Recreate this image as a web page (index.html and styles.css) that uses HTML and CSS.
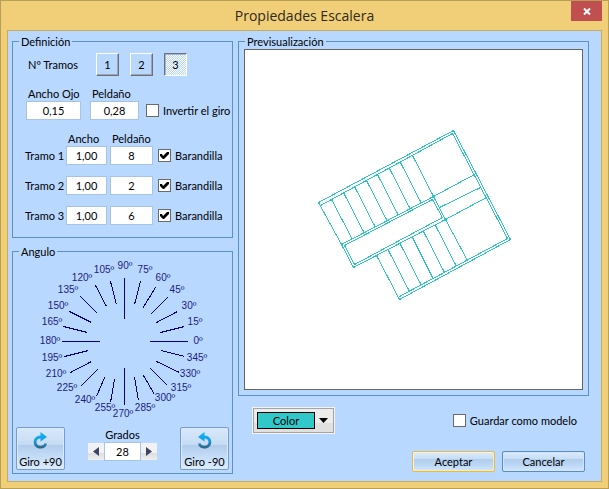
FILE: index.html
```html
<!DOCTYPE html>
<html lang="es">
<head>
<meta charset="utf-8">
<title>Propiedades Escalera</title>
<link rel="stylesheet" href="styles.css">
</head>
<body>
<div class="window">
  <header class="titlebar">
    <h1 class="title">Propiedades Escalera</h1>
    <button class="close" type="button" aria-label="Cerrar">
      <svg width="8" height="7" viewBox="0 0 8 7"><path d="M1 0.5 7 6.5M7 0.5 1 6.5" stroke="#fff" stroke-width="2" fill="none"/></svg>
    </button>
  </header>
  <form class="client">
    <div class="side">
      <fieldset class="group">
        <legend>Definición</legend>
        <div class="flights">
          <span class="flights-label">Nº Tramos</span>
          <button class="flight" type="button">1</button>
          <button class="flight" type="button">2</button>
          <button class="flight pressed" type="button" aria-pressed="true">3</button>
        </div>
        <div class="sizes">
          <label for="ojo">Ancho Ojo</label>
          <label for="huella">Peldaño</label>
          <input class="field" id="ojo" type="text" value="0,15">
          <input class="field" id="huella" type="text" value="0,28">
          <label class="check"><input type="checkbox">Invertir el giro</label>
        </div>
        <div class="runs">
          <span class="run-head ancho">Ancho</span>
          <span class="run-head">Peldaño</span>
          <label class="run-name" for="a1">Tramo 1</label>
          <input class="field" id="a1" type="text" value="1,00">
          <input class="field" type="text" value="8" aria-label="Peldaños tramo 1">
          <label class="check"><input type="checkbox" checked>Barandilla</label>
          <label class="run-name" for="a2">Tramo 2</label>
          <input class="field" id="a2" type="text" value="1,00">
          <input class="field" type="text" value="2" aria-label="Peldaños tramo 2">
          <label class="check"><input type="checkbox" checked>Barandilla</label>
          <label class="run-name" for="a3">Tramo 3</label>
          <input class="field" id="a3" type="text" value="1,00">
          <input class="field" type="text" value="6" aria-label="Peldaños tramo 3">
          <label class="check"><input type="checkbox" checked>Barandilla</label>
        </div>
      </fieldset>
      <fieldset class="group">
        <legend>Angulo</legend>
        <svg class="dial" viewBox="13 259 219 163">
          <path class="ticks" transform="translate(.5 .5)" d="M149 341H187M61 341H99M124 277V318M124 367V404M110 281 116 304M140 281 134 304M95 285 106 306M155 287 142 308M80 296 97 313M167 297 150 314M69 311 91 322M177 311 156 322M63 326 87 332M184 326 160 332M64 356 88 350M161 350 184 356M70 372 91 361M156 361 179 372M80 386 97 369M150 368 167 385M96 396 104 377M143 375 154 394M110 402 114 379M134 377 138 400"/>
          <g class="degrees">
            <text x="198" y="344">0º</text>
            <text x="195" y="325">15º</text>
            <text x="189" y="309">30º</text>
            <text x="177" y="293">45º</text>
            <text x="163" y="281">60º</text>
            <text x="145" y="273">75º</text>
            <text x="125" y="269">90º</text>
            <text x="104" y="273">105º</text>
            <text x="82" y="281">120º</text>
            <text x="68" y="293">135º</text>
            <text x="58" y="309">150º</text>
            <text x="52" y="325">165º</text>
            <text x="50" y="344">180º</text>
            <text x="52" y="361">195º</text>
            <text x="56" y="377">210º</text>
            <text x="67" y="391">225º</text>
            <text x="85" y="403">240º</text>
            <text x="105" y="411">255º</text>
            <text x="123" y="417">270º</text>
            <text x="145" y="411">285º</text>
            <text x="165" y="401">300º</text>
            <text x="181" y="391">315º</text>
            <text x="190" y="377">330º</text>
            <text x="197" y="361">345º</text>
          </g>
        </svg>
        <div class="turns">
          <button class="turn" type="button">
            <svg width="15" height="17" viewBox="0 0 15 17"><defs><linearGradient id="g" x1="0" y1="0" x2="0" y2="1"><stop offset="0" stop-color="#12b2fa"/><stop offset=".5" stop-color="#14a0e6"/><stop offset="1" stop-color="#34607c"/></linearGradient></defs><path fill="url(#g)" d="M7.500 0 14 5 7.500 9.500V6.500C5 6.500 3.500 8 3.500 10C3.500 12.500 5.200 13.700 7.500 13.700C9.500 13.700 10.800 13 11.300 11.500H14C13.500 14.700 11 16.500 7.500 16.500C3.500 16.500 .7 14 .7 10C.7 6.300 3.500 3.500 7.500 3.400Z"/></svg>
            Giro +90
          </button>
          <div class="degrees-box">
            <label for="grados">Grados</label>
            <div class="spinner">
              <button class="step" type="button" aria-label="Menos"><svg width="6" height="9" viewBox="0 0 6 9"><path d="M6 0V9L0 4.500Z" fill="#3c4664"/></svg></button>
              <input class="field" id="grados" type="text" value="28">
              <button class="step" type="button" aria-label="Más"><svg width="6" height="9" viewBox="0 0 6 9"><path d="M0 0V9L6 4.500Z" fill="#3c4664"/></svg></button>
            </div>
          </div>
          <button class="turn" type="button">
            <svg width="15" height="17" viewBox="0 0 15 17"><path transform="matrix(-1 0 0 1 15 0)" fill="url(#g)" d="M7.500 0 14 5 7.500 9.500V6.500C5 6.500 3.500 8 3.500 10C3.500 12.500 5.200 13.700 7.500 13.700C9.500 13.700 10.800 13 11.300 11.500H14C13.500 14.700 11 16.500 7.500 16.500C3.500 16.500 .7 14 .7 10C.7 6.300 3.500 3.500 7.500 3.400Z"/></svg>
            Giro -90
          </button>
        </div>
      </fieldset>
    </div>
    <div class="main">
      <fieldset class="group">
        <legend>Previsualización</legend>
        <div class="preview">
          <svg class="plan" viewBox="245 50 337 339">
            <g transform="translate(.5 .5)">
              <path d="M318 202 453 130 510 239 399 299 376 255M320 205 452 133 507 238 399 296M318 202 341 244"/>
              <path d="M331 199 352 239M343 192 364 233M354 186 375 227M366 180 387 221M377 174 398 215M389 168 410 209M400 162 421 203M412 155 433 196"/>
              <path d="M341 244 433 196 445 219 353 267ZM344 245 432 199 442 217 354 264Z"/>
              <path d="M433 196 474 174M439 207 480 187M445 219 486 197"/>
              <path d="M388 250 409 291M400 244 421 285M412 237 433 279M423 231 444 272M435 225 456 266M445 219 467 260"/>
            </g>
          </svg>
        </div>
      </fieldset>
      <div class="options">
        <button class="color" type="button"><span class="swatch">Color</span><svg width="9" height="5" viewBox="0 0 9 5"><path d="M0 0H9L4.500 5Z"/></svg></button>
        <label class="check"><input type="checkbox">Guardar como modelo</label>
      </div>
      <div class="actions">
        <button class="action default" type="submit">Aceptar</button>
        <button class="action" type="button">Cancelar</button>
      </div>
    </div>
  </form>
</div>
</body>
</html>
```
FILE: styles.css
```css
* { box-sizing: border-box; }

body {
  margin: 0;
  font: 11px/15px Lato, "Liberation Sans", sans-serif;
  color: #000;
}

button, input {
  margin: 0;
  padding: 0;
  font: inherit;
  color: inherit;
}

.window {
  display: flex;
  flex-direction: column;
  min-height: 100vh;
  padding: 0 6px 6px;
  background: #f0cf78;
  border: 1px solid #b89f58;
}

.titlebar {
  display: grid;
  grid-template-columns: 31px 1fr 31px;
  height: 29px;
}

.title {
  grid-column: 2;
  margin: 0;
  font: 14px/30px "Open Sans", "Noto Sans", sans-serif;
  text-align: center;
  color: #2f2a1c;
}

.close {
  display: grid;
  place-items: center;
  height: 20px;
  background: #c04f4f;
  border: 0;
}

.client {
  flex: 1;
  display: grid;
  grid-template-columns: 221px 1fr;
  gap: 5px;
  padding: 3px 12px 7px 4px;
  background: #b8d8ff;
  border: 1px solid #c8ab62;
}

.side {
  display: flex;
  flex-direction: column;
  gap: 6px;
}

.group {
  min-width: 0;
  margin: 0;
  padding: 0;
  border: 1px solid #5c90c8;
}

.group legend {
  margin-left: 6px;
  padding: 0 2px;
}

.flights {
  display: flex;
  align-items: center;
  gap: 11px;
  padding: 4px 0 0 15px;
}

.flights-label { width: 57px; }

.flight {
  width: 23px;
  height: 23px;
  background: #b8d8ff;
  border: 1px solid;
  border-color: #fff #6c7078 #6c7078 #fff;
  box-shadow: inset -1px -1px #9aa6b8;
}

.flight.pressed {
  background: repeating-conic-gradient(#fff 0 25%, #b8d8ff 0 50%) 0 0 / 2px 2px;
  border-color: #6c7078 #fff #fff #6c7078;
  box-shadow: inset 1px 1px #a8b8cc;
}

.field {
  width: 100%;
  height: 19px;
  text-align: center;
  background: #fff;
  border: 1px solid #a8c4e4;
}

.sizes {
  display: grid;
  grid-template-columns: 55px 49px 1fr;
  align-items: center;
  column-gap: 9px;
  padding: 10px 0 0 13px;
}

.sizes > label:nth-child(-n+2) { padding-left: 2px; }
.sizes > #ojo { grid-column: 1; }
.sizes .check { margin-left: -2px; }

.check {
  display: flex;
  align-items: center;
  gap: 4px;
  white-space: nowrap;
}

.check input {
  appearance: none;
  width: 13px;
  height: 13px;
  background: #fff;
  border: 1px solid #6a6a6a;
}

.check input:checked::before {
  content: "";
  display: block;
  height: 11px;
  background: #000;
  clip-path: polygon(1px 4px, 3px 4px, 4px 6px, 8px 2px, 10px 2px, 10px 4px, 5px 9px, 4px 9px, 1px 6px);
}

.runs {
  display: grid;
  grid-template-columns: 38px 41px 43px 1fr;
  align-items: center;
  gap: 11px 3px;
  padding: 11px 0 12px 12px;
}

.run-head {
  margin-bottom: -11px;
  padding-left: 2px;
}

.run-head.ancho { grid-column: 2; }
.run-head:nth-child(2) { grid-column: 3 / 5; }
.run-name { white-space: nowrap; }
.runs .check { padding-left: 2px; }

.dial {
  display: block;
  width: 100%;
}

.ticks {
  fill: none;
  stroke: #000080;
  shape-rendering: crispEdges;
}

.degrees {
  font-family: "Liberation Sans", Arial, sans-serif;
  font-size: 10px;
  fill: #1c1c80;
  text-anchor: middle;
}

.turns {
  display: flex;
  justify-content: space-between;
  padding: 5px 3px 3px;
}

.turn {
  display: flex;
  flex-direction: column;
  align-items: center;
  justify-content: space-between;
  width: 49px;
  height: 43px;
  padding-top: 4px;
  white-space: nowrap;
  background: linear-gradient(#d8e8fa 0, #c6dcf4 40%, #b0cdec 42%, #c8dff8 75%, #dcecff);
  border: 1px solid #7c9cc8;
  border-radius: 2px;
  box-shadow: inset 0 0 0 1px #d8eaff;
}

.degrees-box {
  width: 69px;
  text-align: center;
}

.spinner {
  display: grid;
  grid-template-columns: 16px 1fr 16px;
  align-items: center;
}

.step {
  display: grid;
  place-items: center;
  height: 17px;
  background: linear-gradient(#f2f2f2 60%, #dedede 60%, #eee);
  border: 0;
}

.preview {
  margin: 0 5px 5px;
  background: #fff;
  border: 1px solid #646464;
}

.plan {
  display: block;
  width: 100%;
  fill: none;
  stroke: #2ec4c4;
  shape-rendering: crispEdges;
}

.options {
  display: flex;
  align-items: center;
  justify-content: space-between;
  padding: 11px 12px 0 14px;
}

.color {
  display: flex;
  align-items: center;
  gap: 4px;
  width: 83px;
  height: 27px;
  padding: 0 4px;
  background: linear-gradient(#ececec 60%, #e0e0e0 60%);
  border: 1px solid #f4f4f4;
  box-shadow: inset 0 0 0 1px #a4a4a4;
}

.swatch {
  width: 58px;
  background: #30c8c8;
  border: 1px solid #000;
}

.actions {
  display: flex;
  justify-content: flex-end;
  gap: 7px;
  padding: 17px 4px 0 0;
}

.action {
  width: 83px;
  height: 21px;
  background: linear-gradient(#dcebfa 0, #c8def6 35%, #b0cdec 38%, #bcd8f6 70%, #d4e8ff);
  border: 1px solid #5c8cc0;
  border-radius: 2px;
  box-shadow: inset 0 0 0 1px #d0e4fc;
}

.action.default {
  border-color: #dcb868;
  box-shadow: inset -1px -1px #fff08c, inset 1px 1px #fff4c8;
}
```
